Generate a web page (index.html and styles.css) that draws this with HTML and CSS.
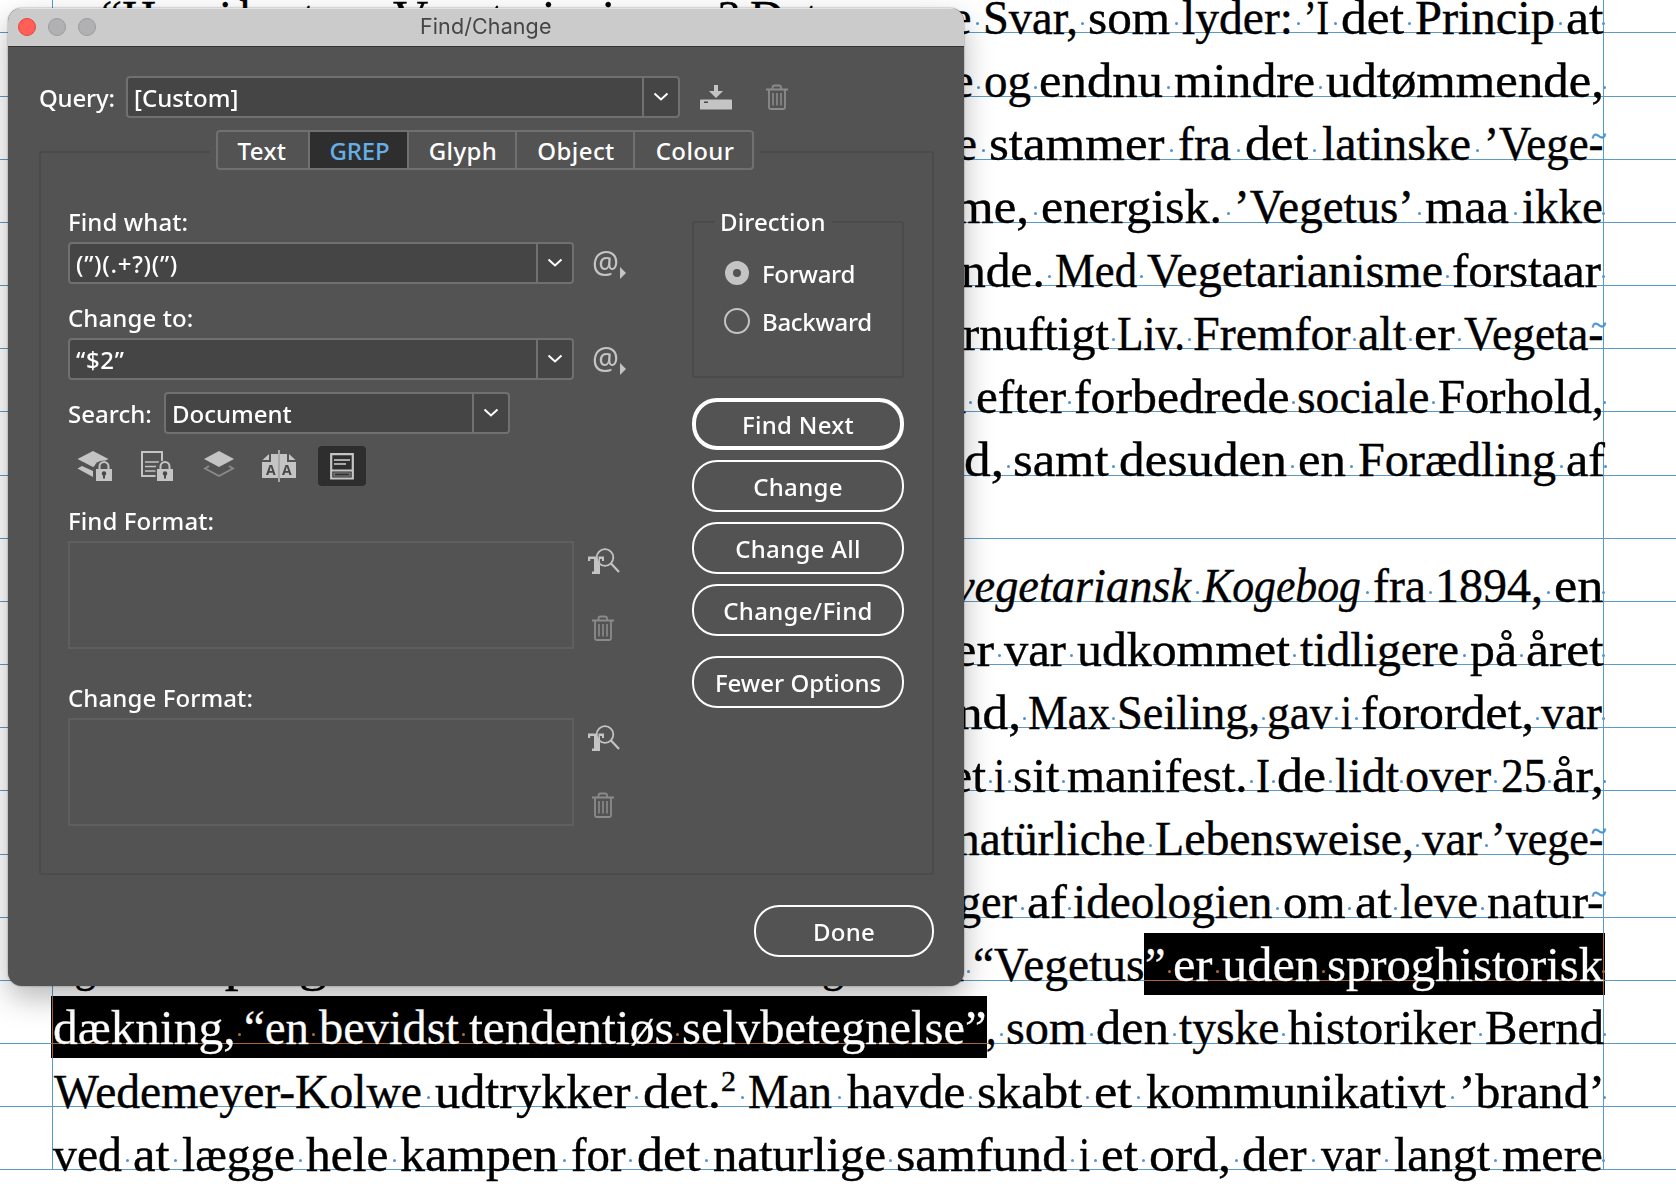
FILE: index.html
```
<!DOCTYPE html>
<html lang="da">
<head>
    <meta charset="utf-8">
    <title>Find/Change</title>
    <link rel="stylesheet" href="styles.css">
</head>
<body>
    <svg class="symbols">
        <symbol id="chevron" viewBox="0 0 16 10"><path d="M1.5 1.5 L8 7.5 L14.5 1.5" fill="none" stroke="#fff" stroke-width="2"/></symbol>
        <symbol id="trash" viewBox="0 0 22 26">
            <path d="M0 5.5H22M6.500 5V3.500Q6.500 1.500 8.500 1.500H13Q15 1.500 15 3.500V5M3 6V23.500Q3 25 4.500 25H17.500Q19 25 19 23.500V6" fill="none" stroke="#8b8b8b" stroke-width="1.800"/>
            <path d="M7 9V21.500M11 9V21.500M15 9V21.500" fill="none" stroke="#8b8b8b" stroke-width="1.600"/>
        </symbol>
        <symbol id="find-type" viewBox="0 0 32 27">
            <circle cx="17" cy="9.500" r="8.300" fill="none" stroke="#c4c4c4" stroke-width="1.800"/>
            <path d="M0 8.500H8.500L9 12L11 15.500L12 17V23.500H12V26H4V23.500H6V11H2.200V13H0Z" fill="#c4c4c4"/>
            <path d="M10.500 8.500H16V13H14V11H12V16H10.500Z" fill="#c4c4c4"/>
            <path d="M23 15.500L31 24" stroke="#c4c4c4" stroke-width="2.200"/>
        </symbol>
        <symbol id="lock" viewBox="0 0 16 20">
            <path d="M3.500 9V5.500A4.500 4.500 0 0 1 12.500 5.500V9" fill="none" stroke="#c4c4c4" stroke-width="2"/>
            <path d="M0 8H16V20H0Z" fill="#c4c4c4"/>
            <circle cx="8" cy="12.500" r="2.200" fill="#484848"/><path d="M7 13H9V17.500H7Z" fill="#484848"/>
        </symbol>
    </svg>

    <main class="page" id="page">
        <div class="frame"></div>
        <div class="selection selection-first"></div>
        <div class="selection selection-second"></div>
    </main>

    <section class="dialog">
        <header class="titlebar">
            <span class="light close"></span>
            <span class="light"></span>
            <span class="light"></span>
            <h1>Find/Change</h1>
        </header>

        <div class="dialog-body">
            <div class="query">
                <label>Query:</label>
                <div class="combo combo-query"><span>[Custom]</span><b><svg width="16" height="10"><use href="#chevron"/></svg></b></div>
                <svg class="save" width="32" height="25" viewBox="0 0 32 25">
                    <path d="M14 0H18V6H23L16 13L9 6H14Z" fill="#c4c4c4"/>
                    <path d="M1 14.500H31Q32 14.500 32 15.500V24.500H0V15.500Q0 14.500 1 14.500Z" fill="#c4c4c4"/>
                    <path d="M4 16.500H8V18H4Z" fill="#484848"/>
                </svg>
                <svg class="delete-query" width="22" height="26"><use href="#trash"/></svg>
            </div>

            <nav class="tabs">
                <span class="tab tab-text">Text</span>
                <span class="tab tab-grep active">GREP</span>
                <span class="tab tab-glyph">Glyph</span>
                <span class="tab tab-object">Object</span>
                <span class="tab tab-colour">Colour</span>
            </nav>

            <div class="panel">
                <div class="options">
                    <label>Find what:</label>
                    <div class="row">
                        <div class="combo"><span class="pattern">(”)(.+?)(”)</span><b><svg width="16" height="10"><use href="#chevron"/></svg></b></div>
                        <span class="special">@<i></i></span>
                    </div>
                    <label class="next">Change to:</label>
                    <div class="row">
                        <div class="combo"><span class="replacement">“$2”</span><b><svg width="16" height="10"><use href="#chevron"/></svg></b></div>
                        <span class="special">@<i></i></span>
                    </div>
                    <div class="row search">
                        <label>Search:</label>
                        <div class="combo combo-search"><span>Document</span><b><svg width="16" height="10"><use href="#chevron"/></svg></b></div>
                    </div>

                    <div class="toggles">
                        <span class="toggle">
                            <svg width="36" height="32" viewBox="0 0 36 32">
                                <path d="M0.500 9L16 1L31.500 9L16 17Z" fill="#c4c4c4"/>
                                <path d="M0.500 18.500L5 16L16 21V27Z" fill="#c4c4c4"/>
                                <path d="M17 31V17Q19 10.500 27 10.500Q33 11 34 17V31Z" fill="#535353"/>
                                <use href="#lock" x="19" y="11" width="16" height="20"/>
                            </svg>
                        </span>
                        <span class="toggle">
                            <svg width="34" height="32" viewBox="0 0 34 32">
                                <path d="M2 2H22V26H2Z" fill="none" stroke="#c4c4c4" stroke-width="2"/>
                                <path d="M5 12H19M5 16.500H17M5 21H17" stroke="#c4c4c4" stroke-width="1.600"/>
                                <path d="M15.500 31V18Q17 10.500 25 10.500Q32 11 33 18V31Z" fill="#535353"/>
                                <use href="#lock" x="17" y="11" width="16" height="20"/>
                            </svg>
                        </span>
                        <span class="toggle">
                            <svg width="32" height="32" viewBox="0 0 32 32">
                                <path d="M1 9L16 1L31 9L16 17Z" fill="#c4c4c4"/>
                                <path d="M6 16L2 18.500L16 26L30 18.500L26 16" fill="none" stroke="#8b8b8b" stroke-width="1.800"/>
                            </svg>
                        </span>
                        <span class="toggle spreads">
                            <svg width="34" height="32" viewBox="0 0 34 32">
                                <path d="M9 4H16V28H0V12H9ZM0.500 10L7 4V10Z" fill="#c4c4c4"/>
                                <path d="M25 4H18V28H34V12H25ZM33.500 10L27 4V10Z" fill="#c4c4c4"/>
                                <path d="M17 0V32" stroke="#c4c4c4" stroke-width="1.500"/>
                                <text x="4" y="25">A</text><text x="20" y="25">A</text>
                            </svg>
                        </span>
                        <span class="toggle on">
                            <svg width="24" height="27" viewBox="0 0 24 27">
                                <path d="M1.200 1.200H22.800V25.500H1.200ZM1 17.500H23" fill="none" stroke="#c4c4c4" stroke-width="2.200"/>
                                <path d="M4 7H20M4 11H16" stroke="#a8a8a8" stroke-width="1.800"/>
                                <path d="M4 20H20V23H4Z" fill="none" stroke="#8b8b8b" stroke-width="1.200"/>
                            </svg>
                        </span>
                    </div>

                    <label class="next">Find Format:</label>
                    <div class="row">
                        <div class="format"></div>
                        <div class="format-tools">
                            <svg width="32" height="27"><use href="#find-type"/></svg>
                            <svg width="22" height="26"><use href="#trash"/></svg>
                        </div>
                    </div>
                    <label class="next far">Change Format:</label>
                    <div class="row">
                        <div class="format"></div>
                        <div class="format-tools">
                            <svg width="32" height="27"><use href="#find-type"/></svg>
                            <svg width="22" height="26"><use href="#trash"/></svg>
                        </div>
                    </div>
                </div>

                <div class="actions">
                    <fieldset class="direction">
                        <legend>Direction</legend>
                        <div class="radio"><i class="dot checked"></i>Forward</div>
                        <div class="radio"><i class="dot"></i>Backward</div>
                    </fieldset>
                    <button class="primary">Find Next</button>
                    <button>Change</button>
                    <button>Change All</button>
                    <button>Change/Find</button>
                    <button class="fewer">Fewer Options</button>
                </div>
            </div>

            <button class="done">Done</button>
        </div>
    </section>

    <script src="page.js"></script>
</body>
</html>
```
FILE: styles.css
```
* { box-sizing: border-box; }
body { margin: 0; width: 1676px; height: 1202px; overflow: hidden; position: relative; background: #fff;
       font-family: "Noto Sans", sans-serif; font-size: 24px; color: #fff; }
.symbols { position: absolute; width: 0; height: 0; }
svg { display: block; flex: none; }

/* document page behind the dialog */
.page { position: relative; margin-top: -29.7px; isolation: isolate; background: #fff;
        font-family: "Liberation Serif", serif; font-size: 47.5px; color: #000; }
.line { display: flex; align-items: flex-end; height: 63.17px; border-bottom: 1px solid #5a9bc9; white-space: nowrap; }
.word { flex: none; line-height: 46px; margin-bottom: -8.5px; transform-origin: left; -webkit-text-stroke: 0.4px #000; }
.word.italic { font-style: italic; }
.word.note { font-size: 30px; margin-bottom: 2px; }
.gap { flex: none; display: flex; justify-content: center; align-items: flex-end; height: 12px; }
.space::after { content: ""; width: 3px; height: 3px; margin-bottom: 7px; border-radius: 50%; background: #4a94d6; flex: none; }
.end { position: relative; }
.hyphen { position: absolute; right: -3px; bottom: 10px; font-size: 28px; line-height: 26px; color: #4a94d6; -webkit-text-stroke: 0.6px #4a94d6; }
.frame { position: absolute; left: 52px; top: 0; width: 1552px; height: 1200px; border: solid #5a9bc9; border-width: 0 1px; }
.selection { position: absolute; z-index: 2; height: 62px; background: #fff; mix-blend-mode: difference; }
.selection-first { left: 1144px; top: 962.2px; width: 461px; }
.selection-second { left: 51px; top: 1025.2px; width: 936px; }

/* dialog */
.dialog { position: absolute; z-index: 5; left: 8px; top: 8px; width: 956px; height: 978px; border-radius: 14px;
          background: #535353; overflow: hidden; box-shadow: 0 0 2px rgba(0,0,0,0.45), 0 12px 30px rgba(0,0,0,0.28); }
.titlebar { display: flex; align-items: center; gap: 12px; height: 39px; padding-left: 10px; background: #cbcbcb;
            border-bottom: 1px solid #333; box-shadow: inset 0 1px 0 #e2e2e2; }
.light { width: 18px; height: 18px; border-radius: 50%; background: #b1b1b3; border: 1px solid #9b9b9d; }
.light.close { background: #ff5f57; border-color: #e2463f; }
.titlebar h1 { margin: 0 0 2px 312px; font: 400 21.5px Inter, sans-serif; color: #454545; letter-spacing: 0.1px; }
.dialog-body { padding: 29px 30px 0 31px; }
label { display: block; height: 36px; line-height: 32px; letter-spacing: 0.1px; white-space: nowrap; }
label, button, legend, .tab, .combo, .radio { font-weight: 500; }

.query { display: flex; align-items: center; height: 42px; }
.query label { width: 87px; height: 30px; letter-spacing: -0.2px; }
.combo { display: flex; width: 506px; height: 42px; background: #454545; border: 2px solid #707070; border-radius: 4px; }
.combo span { flex: 1; padding-left: 6px; line-height: 39px; white-space: nowrap; }
.combo b { display: flex; align-items: center; justify-content: center; width: 36px; border-left: 2px solid #707070; }
.combo-query { width: 554px; }
.combo .pattern { letter-spacing: 0.7px; }
.combo .replacement { letter-spacing: 0.7px; }
.save { margin-left: 20px; }
.delete-query { margin-left: 34px; }

.tabs { position: relative; display: flex; width: 550px; margin: 12px 0 -19px 171px; padding: 0 6px; background: #535353; }
.tab { height: 40px; line-height: 37px; text-align: center; border: 2px solid #707070; border-left-width: 0; letter-spacing: 0.4px; }
.tab:first-child { padding-right: 2px; border-left-width: 2px; border-radius: 4px 0 0 4px; }
.tab:last-child { padding-left: 3px; border-radius: 0 4px 4px 0; }
.tab-text { width: 94px; }
.tab-grep { width: 99px; }
.tab-glyph { width: 108px; padding-left: 2px; }
.tab-object { width: 118px; padding-left: 2px; }
.tab-colour { width: 119px; }
.tab.active { background: #2e2e2e; color: #67aee6; letter-spacing: -0.1px; padding-left: 2px; }

.panel { display: flex; justify-content: space-between; width: 895px; height: 724px; padding: 53px 28px 0 27px;
         border: 2px solid #4b4b4b; border-radius: 3px; }
.row { display: flex; }
.next { margin-top: 18px; }
.next.far { margin-top: 33.5px; }
.special { position: relative; width: 40px; padding-left: 18px; line-height: 40px; font-size: 30px; color: #c4c4c4; }
.special i { position: absolute; left: 46px; top: 25px; border: 6px solid transparent; border-left-color: #c4c4c4; border-right-width: 0; }
.search { margin-top: 12px; align-items: center; }
.search label { width: 96px; height: 31px; letter-spacing: 0; }
.combo-search { width: 346px; }

.toggles { display: flex; gap: 12px; height: 40px; margin-top: 12px; padding-left: 2px; }
.toggle { display: flex; align-items: center; justify-content: center; width: 50px; }
.toggle.spreads { padding-right: 4px; }
.toggle text { font: 700 14px "Open Sans", sans-serif; fill: #484848; }
.toggle.on { width: 48px; background: #2e2e2e; border-radius: 4px; }
.toggles + .next { margin-top: 18.5px; }

.format { width: 506px; height: 108px; border: 2px solid #5f5f5f; }
.format-tools { display: flex; flex-direction: column; align-items: center; gap: 40px; width: 32px; margin: 7px 0 0 14px; }
.format-tools svg + svg { margin-right: 2px; }

.actions { display: flex; flex-direction: column; gap: 10px; width: 212px; }
.direction { height: 172px; margin: 0 0 10px; padding: 11px 0 0 34px; border: 2px solid #4b4b4b; border-radius: 3px; }
.direction legend { margin-left: -13px; padding: 0 6px 0 5px; height: 32px; line-height: 32px; letter-spacing: 0.1px; }
.radio { display: flex; align-items: center; gap: 12px; height: 48px; margin-left: 2px; letter-spacing: -0.3px; }
.radio .dot { width: 26px; height: 26px; margin-left: -6px; border: 2px solid #c4c4c4; border-radius: 50%; }
.radio .checked { width: 24px; height: 24px; margin: 0 1px 0 -5px; border-width: 8px; }
button { height: 52px; padding: 1px 0 0; border: 2px solid #fff; border-radius: 25px; background: transparent;
         color: #fff; font-family: inherit; font-size: 24px; letter-spacing: 0.3px; }
button.primary { border-width: 4px; }
button.fewer { margin-top: 10px; letter-spacing: 0; }
.done { display: block; width: 180px; margin: 30px 0 0 auto; padding: 0; }
```
FILE: page.js
```
// Justified lines of the page: [word, left edge, right edge]
const lines = [
    [["“Hvori", 101, 232], ["bestaar", 240, 372], ["Vegetarianismen?", 393, 740], ["Det", 750, 818], ["e", 951, 971.5], ["Svar,", 982.5, 1077.5], ["som", 1088, 1170], ["lyder:", 1182, 1293], ["’I", 1304, 1329], ["det", 1341, 1404], ["Princip", 1415, 1555], ["at", 1566, 1603.5]],
    [["e", 953, 973.5], ["og", 984, 1031], ["endnu", 1039, 1163], ["mindre", 1174, 1315], ["udtømmende,", 1326, 1604]],
    [["e", 956, 977], ["stammer", 989, 1164.5], ["fra", 1178, 1231], ["det", 1245, 1308], ["latinske", 1321.5, 1470.5], ["’Vege-", 1484, 1603.5]],
    [["me,", 954, 1029], ["energisk.", 1041, 1222], ["’Vegetus’", 1234, 1414], ["maa", 1424.5, 1508.5], ["ikke", 1522, 1603]],
    [["nde.", 961, 1045], ["Med", 1054.5, 1136.5], ["Vegetarianisme", 1147, 1443], ["forstaar", 1452, 1601]],
    [["rnuftigt", 963, 1109], ["Liv.", 1117, 1185], ["Fremfor", 1193, 1350.5], ["alt", 1358, 1406], ["er", 1414, 1454.5], ["Vegeta-", 1464, 1603.5]],
    [["n", 943, 966], ["efter", 975.5, 1065.5], ["forbedrede", 1074, 1289.5], ["sociale", 1296.5, 1429], ["Forhold,", 1438, 1604]],
    [["d,", 964, 1004], ["samt", 1013, 1108.5], ["desuden", 1119, 1287], ["en", 1297.5, 1345.5], ["Forædling", 1358, 1556], ["af", 1566, 1605]],
    [],
    [["vegetariansk", 954, 1191], ["Kogebog", 1203, 1361], ["fra", 1373, 1426], ["1894,", 1435, 1543], ["en", 1553.5, 1603]],
    [["er", 953, 994], ["var", 1004, 1066], ["udkommet", 1077, 1290], ["tidligere", 1299.5, 1458.5], ["på", 1469.5, 1516.5], ["året", 1526, 1603.5]],
    [["nd,", 957, 1021], ["Max", 1028, 1110], ["Seiling,", 1117, 1260], ["gav", 1266.5, 1332], ["i", 1341, 1352], ["forordet,", 1361, 1534], ["var", 1541, 1602]],
    [["et", 950, 986], ["i", 994, 1005], ["sit", 1013, 1059.5], ["manifest.", 1066.5, 1247], ["I", 1256, 1270], ["de", 1277, 1326], ["lidt", 1334.5, 1398.5], ["over", 1405, 1491], ["25", 1500.5, 1546], ["år,", 1552, 1604]],
    [["natürliche", 956, 1145.5], ["Lebensweise,", 1154.5, 1413.5], ["var", 1422, 1482], ["’vege-", 1491, 1603.5]],
    [["ger", 958, 1017], ["af", 1027, 1067], ["ideologien", 1072.5, 1272], ["om", 1282.5, 1345], ["at", 1354.5, 1391], ["leve", 1400, 1478], ["natur-", 1487, 1603.5]],
    [["og", 53, 96], ["sprog", 203, 327], ["g", 822, 844], ["m", 927, 964], ["“Vegetus", 972.5, 1144], ["”", 1144.5, 1165], ["er", 1173, 1212.5], ["uden", 1222, 1320], ["sproghistorisk", 1327, 1603]],
    [["dækning,", 52.5, 235], ["“en", 243.5, 308.5], ["bevidst", 319, 459], ["tendentiøs", 468.5, 673.5], ["selvbetegnelse”", 681.5, 986], [",", 985.5, 996], ["som", 1005.5, 1086], ["den", 1095.5, 1168.5], ["tyske", 1178.5, 1279], ["historiker", 1287.5, 1475], ["Bernd", 1484.5, 1603.5]],
    [["Wedemeyer-Kolwe", 53.5, 421.5], ["udtrykker", 435, 630.5], ["det.", 643, 721], ["2", 720.5, 735.5], ["Man", 747.5, 831.5], ["havde", 846, 964.5], ["skabt", 976, 1081], ["et", 1093, 1131], ["kommunikativt", 1145, 1445], ["’brand’", 1458, 1604]],
    [["ved", 53, 122], ["at", 133, 169.5], ["lægge", 181.5, 294.5], ["hele", 306, 388.5], ["kampen", 399.5, 557.5], ["for", 570.5, 625], ["det", 636.5, 700], ["naturlige", 712.5, 885.5], ["samfund", 895.5, 1066.5], ["i", 1078.5, 1089.5], ["et", 1101, 1138], ["ord,", 1149, 1231], ["der", 1241.5, 1306], ["var", 1320.5, 1380], ["langt", 1393.5, 1489.5], ["mere", 1502, 1603]]
];
const italics = ["vegetariansk", "Kogebog"];
const page = document.getElementById('page');

lines.forEach(words => {
    const line = document.createElement('div');
    line.className = 'line';
    page.appendChild(line);
    let x = 0;
    words.forEach(([text, left, right]) => {
        const gap = document.createElement('span');
        gap.className = left - x > 5 && x > 0 ? 'gap space' : 'gap';
        gap.style.width = Math.max(0, left - x) + 'px';
        line.appendChild(gap);

        const word = document.createElement('span');
        word.className = 'word';
        if (italics.includes(text)) word.classList.add('italic');
        if (text === '2') word.classList.add('note');
        word.textContent = text;
        line.appendChild(word);
        // stretch the glyphs so the word fills its measure
        const natural = word.getBoundingClientRect().width;
        word.style.transform = 'scaleX(' + (right - left) / natural + ')';
        word.style.marginRight = (right - left - natural) + 'px';
        x = Math.max(right, left);
    });
    if (!words.length) return;
    const end = document.createElement('span');
    if (words[words.length - 1][0].endsWith('-')) {
        end.className = 'end';
        end.innerHTML = '<span class="hyphen">~</span>';
    } else {
        end.className = 'gap space';
        end.style.width = Math.max(0, 2 * (1603.5 - x)) + 'px';
    }
    line.appendChild(end);
});
```
